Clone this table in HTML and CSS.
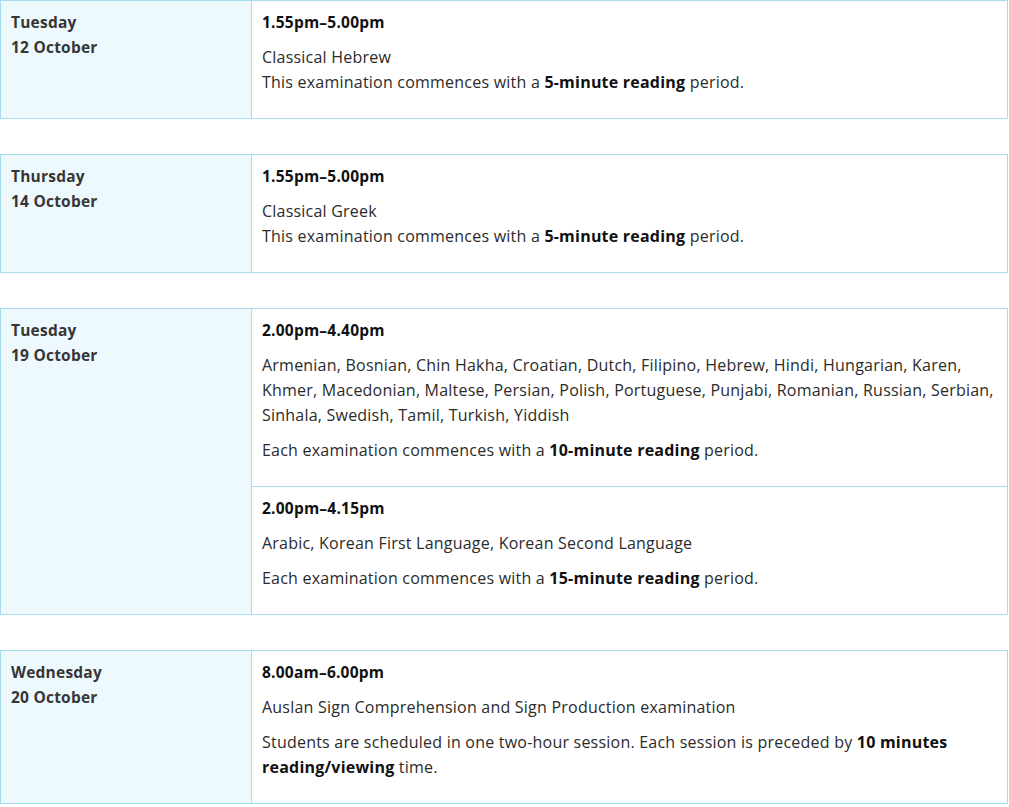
FILE: index.html
```html
<!DOCTYPE html>
<html lang="en">
<head>
<meta charset="utf-8">
<title>Exam timetable</title>
<link rel="stylesheet" href="styles.css">
</head>
<body>
<div class="schedule">
  <table class="exam">
    <tr>
      <th class="date" scope="row">Tuesday<br>12 October</th>
      <td class="info">
        <p class="time">1.55pm–5.00pm</p>
        <p>Classical Hebrew<br>This examination commences with a <strong>5-minute reading</strong> period.</p>
      </td>
    </tr>
  </table>

  <table class="exam">
    <tr>
      <th class="date" scope="row">Thursday<br>14 October</th>
      <td class="info">
        <p class="time">1.55pm–5.00pm</p>
        <p>Classical Greek<br>This examination commences with a <strong>5-minute reading</strong> period.</p>
      </td>
    </tr>
  </table>

  <table class="exam">
    <tr>
      <th class="date" scope="row" rowspan="2">Tuesday<br>19 October</th>
      <td class="info">
        <p class="time">2.00pm–4.40pm</p>
        <p>Armenian, Bosnian, Chin Hakha, Croatian, Dutch, Filipino, Hebrew, Hindi, Hungarian, Karen, Khmer, Macedonian, Maltese, Persian, Polish, Portuguese, Punjabi, Romanian, Russian, Serbian, Sinhala, Swedish, Tamil, Turkish, Yiddish</p>
        <p>Each examination commences with a <strong>10-minute reading</strong> period.</p>
      </td>
    </tr>
    <tr>
      <td class="info">
        <p class="time">2.00pm–4.15pm</p>
        <p>Arabic, Korean First Language, Korean Second Language</p>
        <p>Each examination commences with a <strong>15-minute reading</strong> period.</p>
      </td>
    </tr>
  </table>

  <table class="exam">
    <tr>
      <th class="date" scope="row">Wednesday<br>20 October</th>
      <td class="info">
        <p class="time">8.00am–6.00pm</p>
        <p>Auslan Sign Comprehension and Sign Production examination</p>
        <p>Students are scheduled in one two-hour session. Each session is preceded by <strong>10 minutes reading/viewing</strong> time.</p>
      </td>
    </tr>
  </table>
</div>
</body>
</html>
```

FILE: styles.css
```css
html, body {
  margin: 0;
  padding: 0;
  background: #ffffff;
}

body {
  font-family: "Open Sans", "Liberation Sans", sans-serif;
  font-size: 16px;
  letter-spacing: 0.22px;
  line-height: 25px;
  color: #2b2b2b;
}

.schedule {
  width: 1008px;
  display: flex;
  flex-direction: column;
  gap: 35px;
}

.exam {
  width: 1008px;
  border-collapse: collapse;
  table-layout: fixed;
}

.exam th,
.exam td {
  border: 1px solid #a7dcef;
  vertical-align: top;
  text-align: left;
}

.date {
  width: 230px;
  background: #eef9fe;
  padding: 9px 10px 13px 10px;
  font-weight: 700;
  font-size: 15.5px;
  color: #363636;
}

.info {
  padding: 9px 10px 13px 10px;
}

.info p {
  margin: 0 0 10px 0;
}

.info .time {
  font-weight: 700;
  font-size: 15.5px;
  color: #111111;
}

strong {
  font-weight: 700;
  color: #111111;
}
```
